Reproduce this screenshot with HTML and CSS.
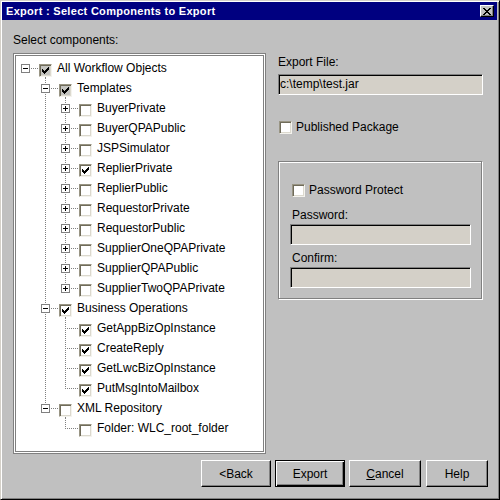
FILE: index.html
```html
<!DOCTYPE html>
<html>
<head>
<meta charset="utf-8">
<title>Export</title>
<link rel="stylesheet" href="styles.css">
</head>
<body>
<div class="window">
  <div class="titlebar">
    <span class="title">Export : Select Components to Export</span>
    <span class="close"><svg width="8" height="7" viewBox="0 0 8 7" shape-rendering="crispEdges"><path fill="#000" d="M0 0h2v1h-2zM6 0h2v1h-2zM1 1h2v1h-2zM5 1h2v1h-2zM2 2h4v1h-4zM3 3h2v1h-2zM2 4h4v1h-4zM1 5h2v1h-2zM5 5h2v1h-2zM0 6h2v1h-2zM6 6h2v1h-2z"/></svg></span>
  </div>
  <div class="main">
    <div class="left">
      <div class="caption">Select components:</div>
      <div class="tree">
        <div class="tree-in">
          <div class="row"><span class="n root"><svg class="exp" width="9" height="9" viewBox="0 0 9 9" shape-rendering="crispEdges"><rect x="0.5" y="0.5" width="8" height="8" fill="#fff" stroke="#808080"/><path d="M2 4h5v1h-5z" fill="#000"/></svg></span><span class="ck exp"><span class="cb gray"><svg width="7" height="7" viewBox="0 0 7 7" shape-rendering="crispEdges"><path fill="#000" d="M0 2h1v3h-1zM1 3h1v3h-1zM2 4h1v3h-1zM3 3h1v3h-1zM4 2h1v3h-1zM5 1h1v3h-1zM6 0h1v3h-1z"/></svg></span></span><span class="t">All Workflow Objects</span></div>

          <div class="row"><span class="g"></span><span class="n mid"><svg class="exp" width="9" height="9" viewBox="0 0 9 9" shape-rendering="crispEdges"><rect x="0.5" y="0.5" width="8" height="8" fill="#fff" stroke="#808080"/><path d="M2 4h5v1h-5z" fill="#000"/></svg></span><span class="ck exp"><span class="cb gray"><svg width="7" height="7" viewBox="0 0 7 7" shape-rendering="crispEdges"><path fill="#000" d="M0 2h1v3h-1zM1 3h1v3h-1zM2 4h1v3h-1zM3 3h1v3h-1zM4 2h1v3h-1zM5 1h1v3h-1zM6 0h1v3h-1z"/></svg></span></span><span class="t">Templates</span></div>

          <div class="row"><span class="g"></span><span class="g v"></span><span class="n mid"><svg class="exp" width="9" height="9" viewBox="0 0 9 9" shape-rendering="crispEdges"><rect x="0.5" y="0.5" width="8" height="8" fill="#fff" stroke="#808080"/><path d="M2 4h5v1h-5zM4 2h1v5h-1z" fill="#000"/></svg></span><span class="ck"><span class="cb"></span></span><span class="t">BuyerPrivate</span></div>

          <div class="row"><span class="g"></span><span class="g v"></span><span class="n mid"><svg class="exp" width="9" height="9" viewBox="0 0 9 9" shape-rendering="crispEdges"><rect x="0.5" y="0.5" width="8" height="8" fill="#fff" stroke="#808080"/><path d="M2 4h5v1h-5zM4 2h1v5h-1z" fill="#000"/></svg></span><span class="ck"><span class="cb"></span></span><span class="t">BuyerQPAPublic</span></div>

          <div class="row"><span class="g"></span><span class="g v"></span><span class="n mid"><svg class="exp" width="9" height="9" viewBox="0 0 9 9" shape-rendering="crispEdges"><rect x="0.5" y="0.5" width="8" height="8" fill="#fff" stroke="#808080"/><path d="M2 4h5v1h-5zM4 2h1v5h-1z" fill="#000"/></svg></span><span class="ck"><span class="cb"></span></span><span class="t">JSPSimulator</span></div>

          <div class="row"><span class="g"></span><span class="g v"></span><span class="n mid"><svg class="exp" width="9" height="9" viewBox="0 0 9 9" shape-rendering="crispEdges"><rect x="0.5" y="0.5" width="8" height="8" fill="#fff" stroke="#808080"/><path d="M2 4h5v1h-5zM4 2h1v5h-1z" fill="#000"/></svg></span><span class="ck"><span class="cb"><svg width="7" height="7" viewBox="0 0 7 7" shape-rendering="crispEdges"><path fill="#000" d="M0 2h1v3h-1zM1 3h1v3h-1zM2 4h1v3h-1zM3 3h1v3h-1zM4 2h1v3h-1zM5 1h1v3h-1zM6 0h1v3h-1z"/></svg></span></span><span class="t">ReplierPrivate</span></div>

          <div class="row"><span class="g"></span><span class="g v"></span><span class="n mid"><svg class="exp" width="9" height="9" viewBox="0 0 9 9" shape-rendering="crispEdges"><rect x="0.5" y="0.5" width="8" height="8" fill="#fff" stroke="#808080"/><path d="M2 4h5v1h-5zM4 2h1v5h-1z" fill="#000"/></svg></span><span class="ck"><span class="cb"></span></span><span class="t">ReplierPublic</span></div>

          <div class="row"><span class="g"></span><span class="g v"></span><span class="n mid"><svg class="exp" width="9" height="9" viewBox="0 0 9 9" shape-rendering="crispEdges"><rect x="0.5" y="0.5" width="8" height="8" fill="#fff" stroke="#808080"/><path d="M2 4h5v1h-5zM4 2h1v5h-1z" fill="#000"/></svg></span><span class="ck"><span class="cb"></span></span><span class="t">RequestorPrivate</span></div>

          <div class="row"><span class="g"></span><span class="g v"></span><span class="n mid"><svg class="exp" width="9" height="9" viewBox="0 0 9 9" shape-rendering="crispEdges"><rect x="0.5" y="0.5" width="8" height="8" fill="#fff" stroke="#808080"/><path d="M2 4h5v1h-5zM4 2h1v5h-1z" fill="#000"/></svg></span><span class="ck"><span class="cb"></span></span><span class="t">RequestorPublic</span></div>

          <div class="row"><span class="g"></span><span class="g v"></span><span class="n mid"><svg class="exp" width="9" height="9" viewBox="0 0 9 9" shape-rendering="crispEdges"><rect x="0.5" y="0.5" width="8" height="8" fill="#fff" stroke="#808080"/><path d="M2 4h5v1h-5zM4 2h1v5h-1z" fill="#000"/></svg></span><span class="ck"><span class="cb"></span></span><span class="t">SupplierOneQPAPrivate</span></div>

          <div class="row"><span class="g"></span><span class="g v"></span><span class="n mid"><svg class="exp" width="9" height="9" viewBox="0 0 9 9" shape-rendering="crispEdges"><rect x="0.5" y="0.5" width="8" height="8" fill="#fff" stroke="#808080"/><path d="M2 4h5v1h-5zM4 2h1v5h-1z" fill="#000"/></svg></span><span class="ck"><span class="cb"></span></span><span class="t">SupplierQPAPublic</span></div>

          <div class="row"><span class="g"></span><span class="g v"></span><span class="n last"><svg class="exp" width="9" height="9" viewBox="0 0 9 9" shape-rendering="crispEdges"><rect x="0.5" y="0.5" width="8" height="8" fill="#fff" stroke="#808080"/><path d="M2 4h5v1h-5zM4 2h1v5h-1z" fill="#000"/></svg></span><span class="ck"><span class="cb"></span></span><span class="t">SupplierTwoQPAPrivate</span></div>

          <div class="row"><span class="g"></span><span class="n mid"><svg class="exp" width="9" height="9" viewBox="0 0 9 9" shape-rendering="crispEdges"><rect x="0.5" y="0.5" width="8" height="8" fill="#fff" stroke="#808080"/><path d="M2 4h5v1h-5z" fill="#000"/></svg></span><span class="ck exp"><span class="cb"><svg width="7" height="7" viewBox="0 0 7 7" shape-rendering="crispEdges"><path fill="#000" d="M0 2h1v3h-1zM1 3h1v3h-1zM2 4h1v3h-1zM3 3h1v3h-1zM4 2h1v3h-1zM5 1h1v3h-1zM6 0h1v3h-1z"/></svg></span></span><span class="t">Business Operations</span></div>

          <div class="row"><span class="g"></span><span class="g v"></span><span class="n mid"></span><span class="ck"><span class="cb"><svg width="7" height="7" viewBox="0 0 7 7" shape-rendering="crispEdges"><path fill="#000" d="M0 2h1v3h-1zM1 3h1v3h-1zM2 4h1v3h-1zM3 3h1v3h-1zM4 2h1v3h-1zM5 1h1v3h-1zM6 0h1v3h-1z"/></svg></span></span><span class="t">GetAppBizOpInstance</span></div>

          <div class="row"><span class="g"></span><span class="g v"></span><span class="n mid"></span><span class="ck"><span class="cb"><svg width="7" height="7" viewBox="0 0 7 7" shape-rendering="crispEdges"><path fill="#000" d="M0 2h1v3h-1zM1 3h1v3h-1zM2 4h1v3h-1zM3 3h1v3h-1zM4 2h1v3h-1zM5 1h1v3h-1zM6 0h1v3h-1z"/></svg></span></span><span class="t">CreateReply</span></div>

          <div class="row"><span class="g"></span><span class="g v"></span><span class="n mid"></span><span class="ck"><span class="cb"><svg width="7" height="7" viewBox="0 0 7 7" shape-rendering="crispEdges"><path fill="#000" d="M0 2h1v3h-1zM1 3h1v3h-1zM2 4h1v3h-1zM3 3h1v3h-1zM4 2h1v3h-1zM5 1h1v3h-1zM6 0h1v3h-1z"/></svg></span></span><span class="t">GetLwcBizOpInstance</span></div>

          <div class="row"><span class="g"></span><span class="g v"></span><span class="n last"></span><span class="ck"><span class="cb"><svg width="7" height="7" viewBox="0 0 7 7" shape-rendering="crispEdges"><path fill="#000" d="M0 2h1v3h-1zM1 3h1v3h-1zM2 4h1v3h-1zM3 3h1v3h-1zM4 2h1v3h-1zM5 1h1v3h-1zM6 0h1v3h-1z"/></svg></span></span><span class="t">PutMsgIntoMailbox</span></div>

          <div class="row"><span class="g"></span><span class="n last"><svg class="exp" width="9" height="9" viewBox="0 0 9 9" shape-rendering="crispEdges"><rect x="0.5" y="0.5" width="8" height="8" fill="#fff" stroke="#808080"/><path d="M2 4h5v1h-5z" fill="#000"/></svg></span><span class="ck exp"><span class="cb"></span></span><span class="t">XML Repository</span></div>

          <div class="row"><span class="g"></span><span class="g"></span><span class="n last"></span><span class="ck"><span class="cb"></span></span><span class="t">Folder: WLC_root_folder</span></div>
        </div>
      </div>
    </div>
    <div class="right">
      <div class="caption">Export File:</div>
      <div class="field">c:\temp\test.jar</div>
      <div class="check pub"><span class="cb"></span><span>Published Package</span></div>
      <div class="group">
        <div class="check"><span class="cb"></span><span>Password Protect</span></div>
        <div class="caption pw">Password:</div>
        <div class="field small"></div>
        <div class="caption cf">Confirm:</div>
        <div class="field small"></div>
      </div>
    </div>
  </div>
  <div class="buttons">
    <button class="btn back">&lt;Back</button>
    <button class="btn export default">Export</button>
    <button class="btn cancel"><u>C</u>ancel</button>
    <button class="btn help">Help</button>
  </div>
</div>
</body>
</html>
```
FILE: styles.css
```css
:root {
  --dv: repeating-linear-gradient(to bottom, #808080 0 1px, transparent 1px 2px);
  --dh: repeating-linear-gradient(to right, #808080 0 1px, transparent 1px 2px);
}
html, body {
  margin: 0;
  padding: 0;
  background: #c0c0c0;
}
body {
  font-family: "Liberation Sans", Arial, sans-serif;
  font-size: 12px;
  color: #000;
}
.window {
  width: 500px;
  height: 500px;
  box-sizing: border-box;
  background: #c0c0c0;
  border: 1px solid;
  border-color: #d4d0c8 #000 #000 #d4d0c8;
  box-shadow: inset 1px 1px #fff, inset -1px -1px #808080;
  padding: 1px 2px 2px 1px;
  display: flex;
  flex-direction: column;
}
.titlebar {
  height: 18px;
  flex: none;
  background: #000080;
  color: #fff;
  display: flex;
  align-items: center;
  justify-content: space-between;
  padding: 0 3px 0 4px;
}
.title {
  font-weight: bold;
  font-size: 11px;
  letter-spacing: 0.3px;
  white-space: nowrap;
}
.close {
  width: 14px;
  height: 12px;
  box-sizing: border-box;
  background: #c0c0c0;
  border: 1px solid;
  border-color: #fff #000 #000 #fff;
  box-shadow: inset -1px -1px #808080;
  display: flex;
  align-items: center;
  justify-content: center;
}
.close svg {
  display: block;
}
.main {
  display: flex;
  padding: 13px 0 0 11px;
}
.left {
  width: 253px;
  flex: none;
}
.caption {
  line-height: 14px;
  white-space: nowrap;
}
.tree {
  margin-top: 6px;
  height: 401px;
  box-sizing: border-box;
  border: 1px solid #808080;
  padding: 1px;
  background: #fff;
}
.tree-in {
  height: 100%;
  box-sizing: border-box;
  border: 1px solid #808080;
  padding: 2px 0 0 5px;
}
.row {
  display: flex;
  height: 20px;
}
.g {
  width: 20px;
  height: 20px;
  flex: none;
}
.g.v {
  background: var(--dv) 4px 0 / 1px 20px no-repeat;
}
.n {
  width: 18px;
  height: 20px;
  flex: none;
  background-repeat: no-repeat;
}
.n.root {
  background-image: var(--dh);
  background-size: 14px 1px;
  background-position: 4px 10px;
}
.n.mid {
  background-image: var(--dh), var(--dv);
  background-size: 14px 1px, 1px 20px;
  background-position: 4px 10px, 4px 0;
}
.n.last {
  background-image: var(--dh), var(--dv);
  background-size: 14px 1px, 1px 11px;
  background-position: 4px 10px, 4px 0;
}
.n .exp {
  display: block;
  margin-top: 6px;
}
.ck {
  width: 13px;
  height: 20px;
  flex: none;
  padding-top: 6px;
  box-sizing: border-box;
}
.ck.exp {
  background: var(--dv) 6px 19px / 1px 1px no-repeat;
}
.cb {
  width: 13px;
  height: 13px;
  box-sizing: border-box;
  flex: none;
  display: flex;
  align-items: center;
  justify-content: center;
  background: #fff;
  border: 1px solid;
  border-color: #999584 #f4f3ee #f4f3ee #999584;
  box-shadow: inset 1px 1px #6f6b5a, inset -1px -1px #dcd9ce;
}
.cb.gray {
  background: #c4c4c0;
}
.cb svg {
  display: block;
}
.t {
  margin-left: 5px;
  line-height: 20px;
  white-space: nowrap;
}
.right {
  width: 205px;
  flex: none;
  margin-left: 12px;
  padding-top: 22px;
}
.field {
  margin-top: 5px;
  height: 21px;
  box-sizing: border-box;
  background: #d4d0c8;
  border: 1px solid;
  border-color: #808080 #fff #fff #808080;
  box-shadow: inset 1px 1px #000;
  padding-left: 1px;
  line-height: 19px;
  white-space: nowrap;
}
.field.small {
  width: 181px;
  margin-top: 2px;
}
.check {
  display: flex;
  align-items: center;
  gap: 4px;
  line-height: 13px;
  white-space: nowrap;
}
.pub {
  margin-top: 26px;
  margin-left: 1px;
}
.group {
  margin-top: 27px;
  width: 204px;
  height: 138px;
  box-sizing: border-box;
  border: 1px solid #808080;
  box-shadow: inset 1px 1px #fff, 1px 1px #fff;
  padding: 22px 0 0 11px;
}
.group .check {
  margin-left: 2px;
}
.caption.pw {
  margin-top: 11px;
  margin-left: 2px;
}
.caption.cf {
  margin-top: 6px;
  margin-left: 2px;
}
.buttons {
  display: flex;
  justify-content: flex-end;
  gap: 4px;
  padding: 6px 9px 0 0;
}
.btn {
  height: 27px;
  box-sizing: border-box;
  margin: 0;
  padding: 0;
  background: #c0c0c0;
  border: 1px solid;
  border-color: #fff #000 #000 #fff;
  box-shadow: inset -1px -1px #808080;
  font-family: "Liberation Sans", Arial, sans-serif;
  font-size: 12px;
  color: #000;
  display: flex;
  align-items: center;
  justify-content: center;
}
.btn.default {
  border-color: #000;
  box-shadow: inset 1px 1px #fff, inset -1px -1px #000, inset -2px -2px #808080;
}
.back { width: 70px; }
.export { width: 70px; }
.cancel { width: 72px; }
.help { width: 62px; margin-left: 1px; }
```
